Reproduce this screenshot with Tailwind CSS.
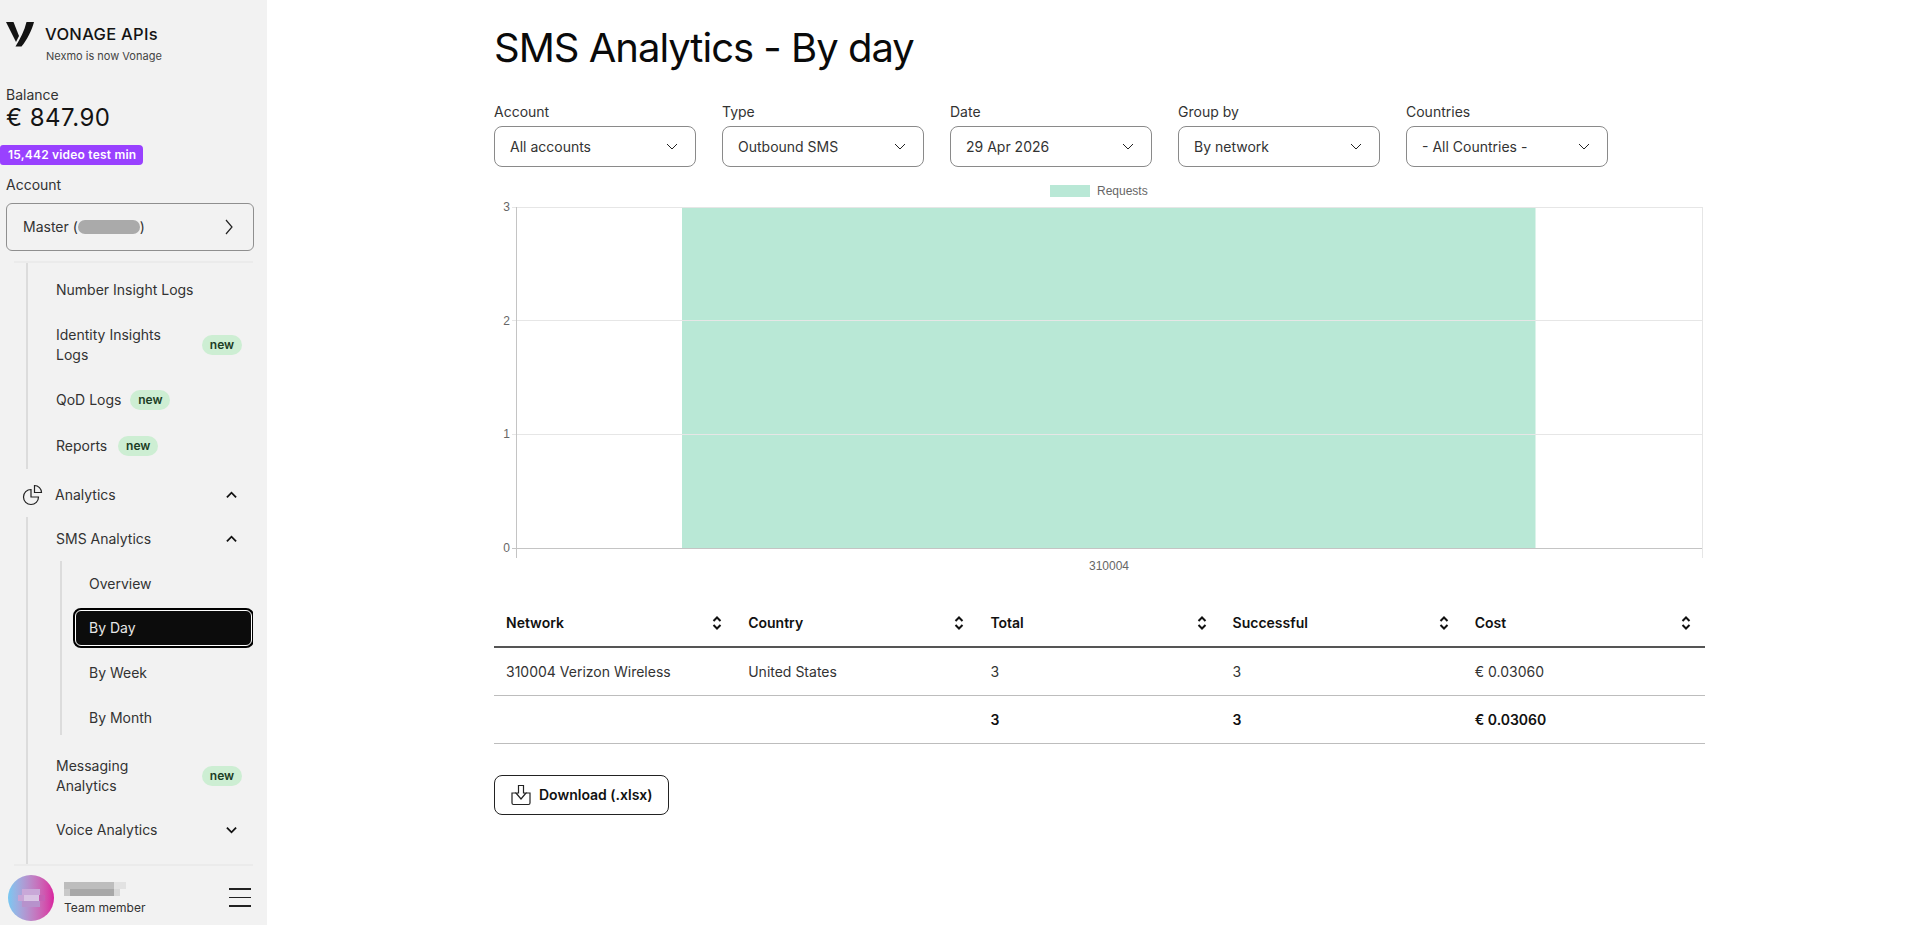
<!DOCTYPE html>
<html lang="en">
<head>
    <meta charset="UTF-8">
    <title>SMS Analytics - By day</title>
    <script src="https://cdn.jsdelivr.net/npm/@tailwindcss/browser@4"></script>
</head>
<body class="font-['Inter',sans-serif] bg-white text-[#1a1a1a]">
    <div class="flex h-screen overflow-hidden">
        <!-- Sidebar -->
        <aside class="w-[267px] shrink-0 bg-[#f2f2f2] flex flex-col">
            <div class="h-[68px] pl-[6px] pt-[22px] flex">
                <svg class="w-[28px] h-[25px] shrink-0" viewBox="0 0 28 25" fill="#141414">
                    <path d="M0 0H7.5L13 14 10 20Z"/>
                    <path d="M20.5 0H28C26 8 21 18 15.5 24.5H9.5C14 17 18.5 9 20.5 0Z"/>
                </svg>
                <div class="ml-[11px]">
                    <div class="text-[16.5px] leading-[24px] font-medium tracking-[0.3px] text-[#141414] whitespace-nowrap">VONAGE APIs</div>
                    <div class="text-[11px] leading-[16px] mt-[2px] ml-px text-[#444] whitespace-nowrap">Nexmo is now Vonage</div>
                </div>
            </div>
            <div class="pl-[6px] mt-[17px] text-sm leading-5 text-[#333]">Balance</div>
            <div class="pl-[6px] text-[24px] leading-[26px] tracking-[0.5px] text-[#141414]">€ 847.90</div>
            <div class="mt-[14px] w-[143px] h-[20px] rounded-r-[4px] rounded-l-[3px] bg-[#9941ff] text-white text-[12px] leading-[20px] font-semibold pl-[8px] whitespace-nowrap tracking-[0.2px]">15,442 video test min</div>
            <div class="pl-[6px] mt-[10px] text-sm leading-5 text-[#333]">Account</div>
            <div class="mx-[6px] mt-[8px] h-[48px] w-[248px] shrink-0 border border-[#8f8f8f] rounded-[6px] flex items-center pl-[16px] pr-[20px] text-sm text-[#333]">
                <span>Master (</span><span class="w-[62px] h-[14px] rounded-full bg-[#aaaaaa]"></span><span>)</span>
                <svg class="ml-auto w-[8px] h-[16px]" viewBox="0 0 8 16" fill="none" stroke="#222" stroke-width="1.2"><path d="M1 1l6 7-6 7"/></svg>
            </div>

            <!-- Scrolling nav -->
            <nav class="mt-[10px] mx-[14px] flex-1 min-h-0 overflow-hidden border-y-2 border-[#ebebeb] text-sm text-[#333]">
                <div class="ml-[12px] border-l-2 border-[#dcdcdc] pl-[28px] pt-[5px] h-[206px]">
                    <div class="h-[44.5px] flex items-center">Number Insight Logs</div>
                    <div class="h-[65px] flex items-center justify-between pr-[11px]">
                        <span class="leading-[20px] w-[110px]">Identity Insights Logs</span>
                        <span class="w-[40px] h-[20px] rounded-full bg-[#cdeed3] text-[12px] leading-[20px] font-semibold text-center text-[#1c3d26]">new</span>
                    </div>
                    <div class="h-[44.5px] flex items-center gap-[9px]">
                        QoD Logs
                        <span class="w-[40px] h-[20px] rounded-full bg-[#cdeed3] text-[12px] leading-[20px] font-semibold text-center text-[#1c3d26]">new</span>
                    </div>
                    <div class="h-[48px] flex items-center gap-[11px]">
                        Reports
                        <span class="w-[40px] h-[20px] rounded-full bg-[#cdeed3] text-[12px] leading-[20px] font-semibold text-center text-[#1c3d26]">new</span>
                    </div>
                </div>
                <div class="mt-[5px] h-[42.5px] flex items-center pl-[8px] pr-[16px]">
                    <svg class="w-[22px] h-[22px] shrink-0" viewBox="0 0 22 22" fill="none" stroke="#222" stroke-width="1.2">
                        <path d="M9 5.5a7.5 7.5 0 1 0 7.5 7.5H9z"/>
                        <path d="M12.5 1.5v7h7a7 7 0 0 0-7-7z"/>
                    </svg>
                    <span class="ml-[11px]">Analytics</span>
                    <svg class="ml-auto w-[11px] h-[8px]" viewBox="0 0 12 8" fill="none" stroke="#111" stroke-width="2"><path d="M1 6.5l5-5 5 5"/></svg>
                </div>
                <div class="ml-[12px] border-l-2 border-[#dcdcdc] pl-[28px]">
                    <div class="h-[44.5px] flex items-center justify-between pr-[16px]">
                        SMS Analytics
                        <svg class="w-[11px] h-[8px]" viewBox="0 0 12 8" fill="none" stroke="#111" stroke-width="2"><path d="M1 6.5l5-5 5 5"/></svg>
                    </div>
                    <div class="ml-[4px] border-l-2 border-[#dcdcdc] pl-[27px] pt-px h-[174px] text-[#333]">
                        <div class="h-[44.5px] flex items-center">Overview</div>
                        <div class="-ml-[14px] mt-[3.75px] mb-[4.75px] h-[36px] mr-[1px] flex items-center pl-[13px] bg-[#0c0c0c] text-[#e6e6e6] rounded-[6px] border border-white ring-2 ring-black">By Day</div>
                        <div class="h-[44.5px] flex items-center">By Week</div>
                        <div class="h-[44.5px] flex items-center">By Month</div>
                    </div>
                    <div class="mt-[9.5px] h-[63px] flex items-center justify-between pr-[11px]">
                        <span class="leading-[20px] w-[90px]">Messaging Analytics</span>
                        <span class="w-[40px] h-[20px] rounded-full bg-[#cdeed3] text-[12px] leading-[20px] font-semibold text-center text-[#1c3d26]">new</span>
                    </div>
                    <div class="h-[44.5px] flex items-center justify-between pr-[16px]">
                        Voice Analytics
                        <svg class="w-[11px] h-[8px]" viewBox="0 0 12 8" fill="none" stroke="#111" stroke-width="2"><path d="M1 1.5l5 5 5-5"/></svg>
                    </div>
                    <div class="h-[20px]"></div>
                </div>
            </nav>

            <!-- User -->
            <div class="h-[59px] shrink-0 flex items-center pl-[8px] pr-[16px] pt-[4px]">
                <div class="w-[46px] h-[46px] rounded-full bg-gradient-to-r from-[#76c8f2] to-[#d81f9f] flex items-center justify-center">
                    <svg class="w-[27px] h-[18px]" viewBox="0 0 27 18">
                        <rect x="4" y="0" width="18" height="6" fill="#c9a8d8"/>
                        <rect x="0" y="6" width="6" height="6" fill="#c8a4d6"/><rect x="6" y="6" width="15" height="6" fill="#d9c4e4"/><rect x="21" y="6" width="6" height="6" fill="#c65fb4"/>
                        <rect x="4" y="12" width="18" height="6" fill="#b792cc"/>
                    </svg>
                </div>
                <div class="ml-[10px]">
                    <svg class="block mt-[3px] w-[62px] h-[14px]" viewBox="0 0 62 14">
                        <rect width="50" height="7" fill="#bdbdbd"/><rect x="50" width="12" height="7" fill="#e2e2e2"/>
                        <rect y="7" width="6" height="7" fill="#c9c9c9"/><rect x="6" y="7" width="44" height="7" fill="#a8a8a8"/><rect x="50" y="7" width="6" height="7" fill="#d8d8d8"/>
                    </svg>
                    <div class="text-[12px] leading-[16px] mt-[4px] text-[#333] whitespace-nowrap">Team member</div>
                </div>
                <div class="ml-auto w-[22px] flex flex-col gap-[7px]">
                    <div class="h-[1.5px] bg-[#222]"></div>
                    <div class="h-[1.5px] bg-[#222]"></div>
                    <div class="h-[1.5px] bg-[#222]"></div>
                </div>
            </div>
        </aside>

        <!-- Main content -->
        <main class="flex-1 pl-[227px] pt-[24px]">
            <div class="w-[1211px]">
                <h1 class="text-[40px] leading-[48px] font-normal tracking-[-1px] text-[#0a0a0a]">SMS Analytics - By day</h1>

                <div class="mt-[30px] flex gap-[26px] text-sm text-[#333]">
                    <div>
                        <div class="leading-5 mb-[4px]">Account</div>
                        <div class="w-[202px] h-[41px] border border-[#8a8a8a] rounded-[8px] flex items-center justify-between pl-[15px] pr-[17px]">
                            All accounts
                            <svg class="w-[12px] h-[7px]" viewBox="0 0 12 7" fill="none" stroke="#222"><path d="M1 1l5 5 5-5"/></svg>
                        </div>
                    </div>
                    <div>
                        <div class="leading-5 mb-[4px]">Type</div>
                        <div class="w-[202px] h-[41px] border border-[#8a8a8a] rounded-[8px] flex items-center justify-between pl-[15px] pr-[17px]">
                            Outbound SMS
                            <svg class="w-[12px] h-[7px]" viewBox="0 0 12 7" fill="none" stroke="#222"><path d="M1 1l5 5 5-5"/></svg>
                        </div>
                    </div>
                    <div>
                        <div class="leading-5 mb-[4px]">Date</div>
                        <div class="w-[202px] h-[41px] border border-[#8a8a8a] rounded-[8px] flex items-center justify-between pl-[15px] pr-[17px]">
                            29 Apr 2026
                            <svg class="w-[12px] h-[7px]" viewBox="0 0 12 7" fill="none" stroke="#222"><path d="M1 1l5 5 5-5"/></svg>
                        </div>
                    </div>
                    <div>
                        <div class="leading-5 mb-[4px]">Group by</div>
                        <div class="w-[202px] h-[41px] border border-[#8a8a8a] rounded-[8px] flex items-center justify-between pl-[15px] pr-[17px]">
                            By network
                            <svg class="w-[12px] h-[7px]" viewBox="0 0 12 7" fill="none" stroke="#222"><path d="M1 1l5 5 5-5"/></svg>
                        </div>
                    </div>
                    <div>
                        <div class="leading-5 mb-[4px]">Countries</div>
                        <div class="w-[202px] h-[41px] border border-[#8a8a8a] rounded-[8px] flex items-center justify-between pl-[15px] pr-[17px]">
                            - All Countries -
                            <svg class="w-[12px] h-[7px]" viewBox="0 0 12 7" fill="none" stroke="#222"><path d="M1 1l5 5 5-5"/></svg>
                        </div>
                    </div>
                </div>

                <!-- Chart -->
                <svg class="mt-[11px] block w-[1211px] h-[400px] font-['Liberation_Sans',sans-serif]" viewBox="0 0 1211 400">
                    <rect x="556" y="7" width="40" height="12" fill="#b9e8d6"/>
                    <text x="603" y="17" font-size="12" fill="#666">Requests</text>
                    <rect x="188" y="29" width="853.5" height="341" fill="#b9e8d6"/>
                    <g stroke="#e6e6e6" stroke-width="1" fill="none">
                        <path d="M18 29.5H1208M18 142.5H1208M18 256.5H1208M1208.5 29V380"/>
                    </g>
                    <g stroke="#c4c4c4" stroke-width="1" fill="none">
                        <path d="M22.5 29V380M18 370.5H1208"/>
                    </g>
                    <g font-size="12" fill="#666" text-anchor="end">
                        <text x="16" y="33">3</text>
                        <text x="16" y="147">2</text>
                        <text x="16" y="260">1</text>
                        <text x="16" y="374">0</text>
                    </g>
                    <text x="615" y="392" font-size="12" fill="#666" text-anchor="middle">310004</text>
                </svg>

                <!-- Table -->
                <table class="mt-[21px] w-full table-fixed border-collapse text-sm text-[#333]">
                    <thead>
                        <tr class="h-[48px] border-b-2 border-[#555] text-left text-[#111]">
                            <th class="px-[12px] font-semibold">
                                <div class="flex items-center justify-between pr-[2px]">Network
                                    <svg class="w-[10px] h-[14px]" viewBox="0 0 10 14" fill="none" stroke="#111" stroke-width="2"><path d="M1.5 5L5 1.5 8.5 5M1.5 9L5 12.5 8.5 9"/></svg>
                                </div>
                            </th>
                            <th class="px-[12px] font-semibold">
                                <div class="flex items-center justify-between pr-[2px]">Country
                                    <svg class="w-[10px] h-[14px]" viewBox="0 0 10 14" fill="none" stroke="#111" stroke-width="2"><path d="M1.5 5L5 1.5 8.5 5M1.5 9L5 12.5 8.5 9"/></svg>
                                </div>
                            </th>
                            <th class="px-[12px] font-semibold">
                                <div class="flex items-center justify-between pr-[2px]">Total
                                    <svg class="w-[10px] h-[14px]" viewBox="0 0 10 14" fill="none" stroke="#111" stroke-width="2"><path d="M1.5 5L5 1.5 8.5 5M1.5 9L5 12.5 8.5 9"/></svg>
                                </div>
                            </th>
                            <th class="px-[12px] font-semibold">
                                <div class="flex items-center justify-between pr-[2px]">Successful
                                    <svg class="w-[10px] h-[14px]" viewBox="0 0 10 14" fill="none" stroke="#111" stroke-width="2"><path d="M1.5 5L5 1.5 8.5 5M1.5 9L5 12.5 8.5 9"/></svg>
                                </div>
                            </th>
                            <th class="px-[12px] font-semibold">
                                <div class="flex items-center justify-between pr-[2px]">Cost
                                    <svg class="w-[10px] h-[14px]" viewBox="0 0 10 14" fill="none" stroke="#111" stroke-width="2"><path d="M1.5 5L5 1.5 8.5 5M1.5 9L5 12.5 8.5 9"/></svg>
                                </div>
                            </th>
                        </tr>
                    </thead>
                    <tbody>
                        <tr class="h-[48px] border-b border-[#bdbdbd]">
                            <td class="px-[12px] pt-px">310004 Verizon Wireless</td>
                            <td class="px-[12px] pt-px">United States</td>
                            <td class="px-[12px] pt-px">3</td>
                            <td class="px-[12px] pt-px">3</td>
                            <td class="px-[12px] pt-px">€ 0.03060</td>
                        </tr>
                        <tr class="h-[48px] border-b border-[#bdbdbd] font-semibold text-[#111]">
                            <td class="px-[12px] pt-[2px]"></td>
                            <td class="px-[12px] pt-[2px]"></td>
                            <td class="px-[12px] pt-[2px]">3</td>
                            <td class="px-[12px] pt-[2px]">3</td>
                            <td class="px-[12px] pt-[2px]">€ 0.03060</td>
                        </tr>
                    </tbody>
                </table>

                <button class="mt-[31px] w-[175px] h-[40px] border border-[#222] rounded-[8px] flex items-center pl-[15px] text-sm font-semibold text-[#111]">
                    <svg class="w-[22px] h-[22px]" viewBox="0 0 22 22" fill="none" stroke="#222" stroke-width="1.2">
                        <path d="M6 9H2v10a1.5 1.5 0 0 0 1.5 1.5h15A1.5 1.5 0 0 0 20 19V9h-4"/>
                        <path d="M8.5 1.5h5V9H16l-5 6-5-6h2.5z"/>
                    </svg>
                    <span class="ml-[7px]">Download (.xlsx)</span>
                </button>
            </div>
        </main>
    </div>
</body>
</html>
